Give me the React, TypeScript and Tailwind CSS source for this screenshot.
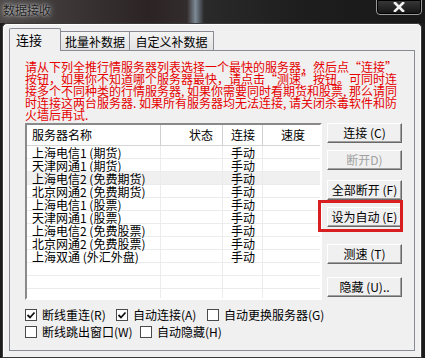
import { ReactNode } from 'react';

const servers = [
  '上海电信1 (期货)',
  '天津网通1 (期货)',
  '上海电信2 (免费期货)',
  '北京网通2 (免费期货)',
  '上海电信1 (股票)',
  '天津网通1 (股票)',
  '上海电信2 (免费股票)',
  '北京网通2 (免费股票)',
  '上海双通 (外汇外盘)',
];

const notice = [
  '请从下列全推行情服务器列表选择一个最快的服务器，然后点“连接”',
  '按钮，如果你不知道哪个服务器最快，请点击“测速”按钮。可同时连',
  '接多个不同种类的行情服务器, 如果你需要同时看期货和股票, 那么请同',
  '时连接这两台服务器. 如果所有服务器均无法连接, 请关闭杀毒软件和防',
  '火墙后再试.',
];

function Btn({ children, disabled, className = '' }: { children: ReactNode; disabled?: boolean; className?: string }) {
  return (
    <div
      className={`h-[20px] w-[75px] flex items-center justify-center bg-[#f0f0f0] border border-t-white border-l-white border-r-[#696969] border-b-[#696969] shadow-[inset_-1px_-1px_0_#a0a0a0] text-[12px] leading-[14px] ${disabled ? 'text-[#a0a0a0]' : 'text-black'} ${className}`}
    >
      {children}
    </div>
  );
}

function Check({ label, checked, className = '' }: { label: string; checked?: boolean; className?: string }) {
  return (
    <div className={`flex items-center shrink-0 ${className}`}>
      <div className="w-[12px] h-[12px] bg-white border border-[#4a4a4a] flex items-center justify-center">
        {checked && (
          <svg width="10" height="10" viewBox="0 0 10 10">
            <path d="M1.5 5 L4 7.5 L8.5 2.5" fill="none" stroke="#111" strokeWidth="1.8" />
          </svg>
        )}
      </div>
      <span className="ml-[5px] text-[12px] leading-[14px] text-black whitespace-nowrap">{label}</span>
    </div>
  );
}

export default function App() {
  const rows = Array.from({ length: 12 }, (_, i) => servers[i] ?? null);

  return (
    <div className="w-[425px] h-[358px] overflow-hidden flex flex-col bg-[#1c1c1c] font-['Noto_Sans_CJK_SC','Noto_Sans',sans-serif]">
      {/* Title bar */}
      <div className="h-[23px] shrink-0 flex items-start justify-between bg-[linear-gradient(90deg,#4e4a4a_0%,#3a3434_18%,#2c2424_35%,#332c2c_44%,#7d8a96_46%,#2a2a2a_48%,#1e1e1e_70%,#181818_100%)]">
        <div className="pl-[3px] pt-[3px] text-[12px] leading-[14px] text-[#1e1e1e] [text-shadow:0_0_6px_rgba(235,235,235,0.85),0_0_2px_rgba(235,235,235,0.7)]">
          数据接收
        </div>
        <div className="mr-[3px] -mt-[1px] w-[46px] h-[16px] rounded-b-[4px] border border-[#9a9a9a] bg-gradient-to-b from-[#3a3a3a] to-[#141414] shadow-[inset_0_0_0_1px_#000] flex items-center justify-center">
          <svg width="12" height="10" viewBox="0 0 12 10">
            <path d="M2 1 L10 9 M10 1 L2 9" stroke="#f2f2f2" strokeWidth="2.6" strokeLinecap="square" />
          </svg>
        </div>
      </div>

      {/* Window body */}
      <div className="ml-[2px] w-[420px] flex-1 bg-[#f0f0f0] border border-[#3a3a3a] rounded-t-[5px] shadow-[inset_1px_1px_0_#ffffff,inset_-1px_0_0_#ffffff]">
        {/* Tabs */}
        <div className="pt-[4px] pl-[6px] h-[26px] flex items-end">
          <div className="relative z-10 -mb-[1px] w-[52px] h-[23px] pl-[6px] flex items-center bg-[#f0f0f0] border border-b-0 border-[#898c95] rounded-t-[2px] text-[13px] leading-[16px] text-black">
            连接
          </div>
          <div className="w-[69px] h-[19px] pt-[2px] flex items-center justify-center border-t border-r border-[#898c95] bg-gradient-to-b from-[#f4f4f4] to-[#e2e2e2] text-[12px] leading-[14px] text-black">
            批量补数据
          </div>
          <div className="w-[84px] h-[19px] pt-[2px] flex items-center justify-center border-t border-r border-[#898c95] bg-gradient-to-b from-[#f4f4f4] to-[#e2e2e2] text-[12px] leading-[14px] text-black">
            自定义补数据
          </div>
        </div>

        {/* Tab panel */}
        <div className="ml-[6px] w-[406px] h-[301px] border border-[#898c95] bg-[#f0f0f0] pt-[10px] pl-[15px] flex flex-col">
          <div className="text-[12px] leading-[12px] text-[#e60000] whitespace-nowrap">
            {notice.map(line => (
              <div key={line} className="h-[12px]">{line}</div>
            ))}
          </div>

          <div className="mt-[2px] flex">
            {/* Server list */}
            <div className="w-[297px] h-[177px] border-2 border-t-[#8a8a8a] border-l-[#8a8a8a] border-r-white border-b-white bg-white overflow-hidden flex flex-col">
              <div className="h-[21px] shrink-0 flex border-b border-[#d5d5d5] text-[12px] leading-[14px] text-black">
                <div className="w-[134px] pl-[5px] flex items-center border-r border-[#d0d0d0]">服务器名称</div>
                <div className="w-[62px] pr-[9px] flex items-center justify-end border-r border-[#d0d0d0]">状态</div>
                <div className="w-[40px] pl-[8px] flex items-center border-r border-[#d0d0d0]">连接</div>
                <div className="flex-1 pr-[15px] flex items-center justify-end">速度</div>
              </div>
              {rows.map((name, i) => (
                <div
                  key={i}
                  className={`h-[13px] shrink-0 flex border-b border-[#ececec] text-[12px] leading-[13px] text-black ${i === 2 ? 'bg-[#f0f0f0]' : ''}`}
                >
                  <div className="w-[134px] pl-[5px] border-r border-[#ececec] whitespace-nowrap">{name}</div>
                  <div className="w-[62px] border-r border-[#ececec]" />
                  <div className="w-[40px] pl-[8px] border-r border-[#ececec]">{name ? '手动' : ''}</div>
                  <div className="flex-1" />
                </div>
              ))}
            </div>

            {/* Buttons */}
            <div className="ml-[5px] flex flex-col">
              <Btn>连接 (C)</Btn>
              <Btn disabled className="mt-[7px]">断开D)</Btn>
              <Btn className="mt-[10px]">全部断开 (F)</Btn>
              <div className="relative mt-[7px]">
                <Btn>设为自动 (E)</Btn>
                <div className="absolute -left-[9px] -right-[1px] -top-[7px] -bottom-[5px] border-[3px] border-[#d81e1e]" />
              </div>
              <Btn className="mt-[17px]">测速 (T)</Btn>
              <Btn className="mt-[13px]">隐藏 (U)..</Btn>
            </div>
          </div>

          {/* Options */}
          <div className="mt-[6px] h-[17px] flex items-center">
            <Check checked label="断线重连(R)" className="w-[91px]" />
            <Check checked label="自动连接(A)" className="w-[91px]" />
            <Check label="自动更换服务器(G)" />
          </div>
          <div className="h-[17px] flex items-center">
            <Check label="断线跳出窗口(W)" className="w-[115px]" />
            <Check label="自动隐藏(H)" />
          </div>
        </div>
      </div>
    </div>
  );
}
